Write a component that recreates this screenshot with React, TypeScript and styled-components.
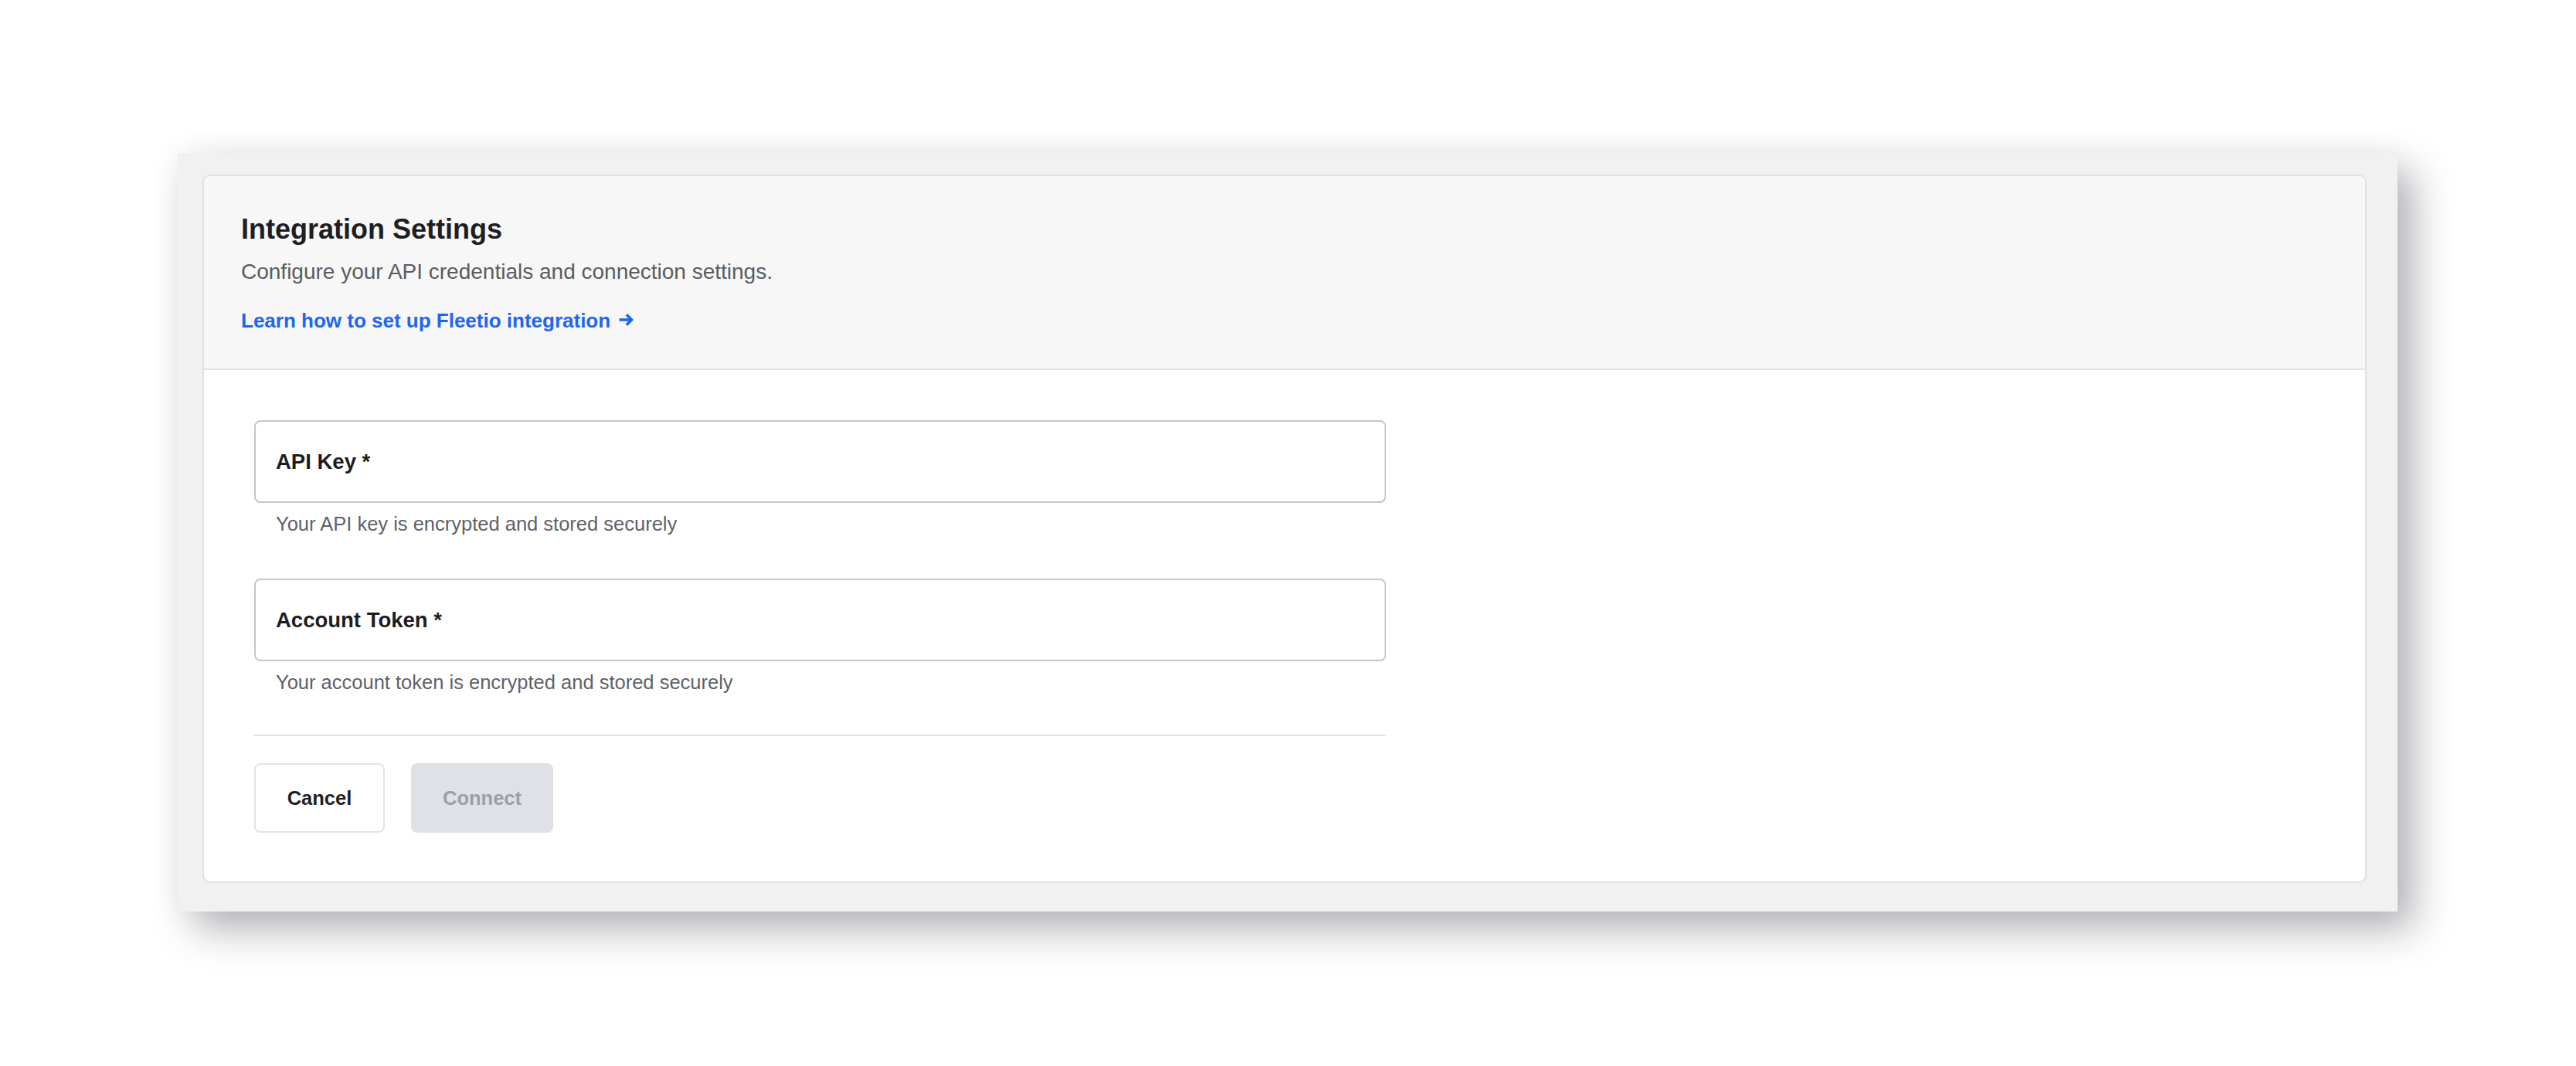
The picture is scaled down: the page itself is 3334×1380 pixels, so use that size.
import React from "react";
import styled, { createGlobalStyle } from "styled-components";

const GlobalStyle = createGlobalStyle`
  html, body {
    margin: 0;
    padding: 0;
    background: #ffffff;
  }
  body {
    font-family: "Liberation Sans", Arial, Helvetica, sans-serif;
    -webkit-font-smoothing: antialiased;
  }
  * { box-sizing: border-box; }
`;

const Page = styled.div`
  width: 3334px;
  height: 1380px;
  padding: 198px 0 0 230px;
  background: #ffffff;
`;

const Frame = styled.div`
  width: 2873px;
  height: 982px;
  padding: 28px 40px 37px 32px;
  background: #f1f1f1;
  box-shadow: 0 0 40px rgba(0, 0, 0, 0.05), 22px 24px 48px rgba(20, 20, 35, 0.3);
`;

const Card = styled.div`
  width: 100%;
  height: 100%;
  border: 2px solid #e1e1e5;
  border-radius: 10px;
  overflow: hidden;
  background: #ffffff;
  display: flex;
  flex-direction: column;
`;

const Header = styled.div`
  background: #f7f7f7;
  border-bottom: 2px solid #e2e2e6;
  padding: 47px 48px 46px 48px;
  display: flex;
  flex-direction: column;
`;

const Title = styled.h1`
  margin: 0;
  font-size: 36px;
  line-height: 44px;
  font-weight: 700;
  color: #1f1f23;
`;

const Subtitle = styled.p`
  margin: 15px 0 0 0;
  font-size: 28px;
  line-height: 36px;
  color: #5a5c63;
`;

const LearnLink = styled.a`
  margin-top: 29px;
  font-size: 26px;
  line-height: 32px;
  font-weight: 700;
  color: #1d66f2;
  text-decoration: none;
  cursor: pointer;
  align-self: flex-start;
  display: inline-flex;
  align-items: center;
  gap: 11px;
`;

const ArrowIcon = styled.svg`
  width: 19px;
  height: 16px;
  flex: none;
  margin-top: -2px;
`;

const Body = styled.div`
  padding: 65px 0 0 65px;
  display: flex;
  flex-direction: column;
`;

const Field = styled.div<{ $gap?: number }>`
  display: flex;
  flex-direction: column;
  margin-top: ${(p) => p.$gap ?? 0}px;
`;

const InputBox = styled.div`
  width: 1465px;
  height: 107px;
  border: 2px solid #c6c6c8;
  border-radius: 8px;
  background: #ffffff;
  display: flex;
  align-items: center;
  padding-left: 26px;
`;

const Label = styled.label`
  font-size: 27.5px;
  line-height: 32px;
  font-weight: 700;
  color: #1d1d1f;
`;

const Helper = styled.div`
  margin-top: 11px;
  padding-left: 28px;
  font-size: 25.5px;
  line-height: 32px;
  color: #5f6168;
`;

const Divider = styled.hr`
  width: 1466px;
  margin: 52px 0 0 -1px;
  border: none;
  border-top: 2px solid #e3e3e6;
`;

const Actions = styled.div`
  display: flex;
  gap: 34px;
  margin-top: 35px;
`;

const Button = styled.button<{ $variant: "outline" | "disabled"; $w: number }>`
  width: ${(p) => p.$w}px;
  height: 90px;
  border-radius: 8px;
  font-family: "Liberation Sans", Arial, Helvetica, sans-serif;
  font-size: 25.5px;
  font-weight: 700;
  display: flex;
  align-items: center;
  justify-content: center;
  padding: 0;
  ${(p) =>
    p.$variant === "outline"
      ? `
    background: #ffffff;
    border: 2px solid #e2e3e7;
    color: #1f1f23;
  `
      : `
    background: #e0e1e6;
    border: none;
    color: #99a0ab;
  `}
`;

export default function App() {
  return (
    <>
      <GlobalStyle />
      <Page>
        <Frame>
          <Card>
            <Header>
              <Title>Integration Settings</Title>
              <Subtitle>Configure your API credentials and connection settings.</Subtitle>
              <LearnLink>
                Learn how to set up Fleetio integration
                <ArrowIcon viewBox="0 0 19 16" fill="none" stroke="currentColor" strokeWidth={3.6}>
                  <path d="M0.5 8 H16.5" />
                  <path d="M9.8 1.3 L16.5 8 L9.8 14.7" strokeLinejoin="miter" />
                </ArrowIcon>
              </LearnLink>
            </Header>
            <Body>
              <Field>
                <InputBox>
                  <Label>API Key *</Label>
                </InputBox>
                <Helper>Your API key is encrypted and stored securely</Helper>
              </Field>
              <Field $gap={55}>
                <InputBox>
                  <Label>Account Token *</Label>
                </InputBox>
                <Helper>Your account token is encrypted and stored securely</Helper>
              </Field>
              <Divider />
              <Actions>
                <Button $variant="outline" $w={169}>Cancel</Button>
                <Button $variant="disabled" $w={184} disabled>Connect</Button>
              </Actions>
            </Body>
          </Card>
        </Frame>
      </Page>
    </>
  );
}
